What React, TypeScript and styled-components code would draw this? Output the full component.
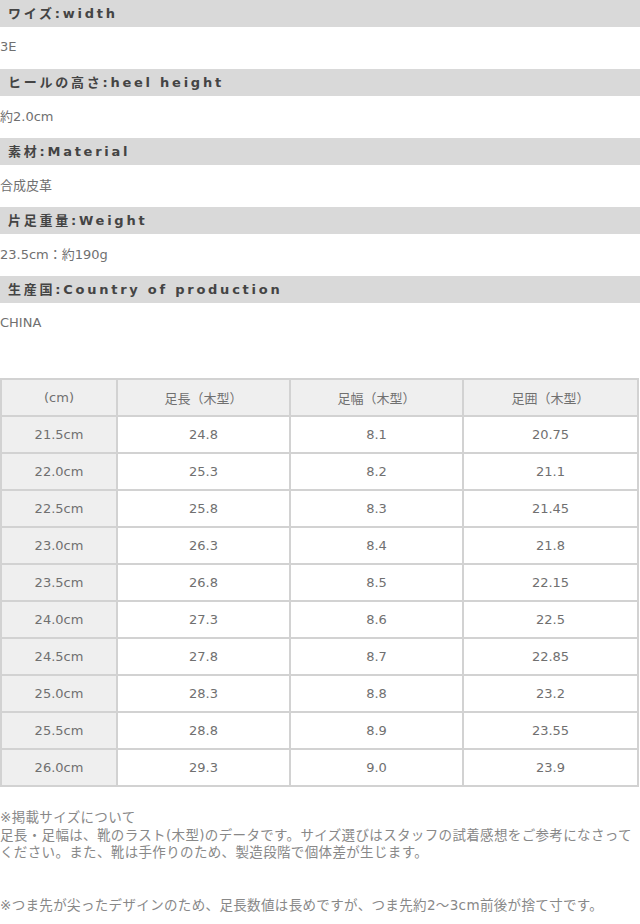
import React from "react";
import styled, { createGlobalStyle } from "styled-components";

const Global = createGlobalStyle`
  html, body { margin: 0; padding: 0; background: #fff; }
  body { font-family: "DejaVu Sans", "Noto Sans CJK JP", sans-serif; color: #777; }
`;

const Page = styled.div`
  width: 640px;
  display: flex;
  flex-direction: column;
`;

const Section = styled.section`
  display: flex;
  flex-direction: column;
`;

const SectionTitle = styled.div`
  height: 27px;
  box-sizing: border-box;
  padding: 0 0 3px 8px;
  background: #d9d9d9;
  display: flex;
  align-items: center;
  font-family: "DejaVu Sans", "Noto Sans CJK JP", sans-serif;
  font-weight: bold;
  font-size: 13px;
  letter-spacing: 2.75px;
  color: #444;
`;

const SectionValue = styled.div`
  height: 42px;
  display: flex;
  align-items: center;
  padding-bottom: 3px;
  box-sizing: border-box;
  font-size: 13px;
  color: #707070;
`;

const Table = styled.table`
  margin-top: 33px;
  width: 639px;
  border-collapse: collapse;
  table-layout: fixed;
  font-size: 13px;
  color: #707070;
`;

const Cell = styled.td<{ $shade?: boolean }>`
  border: 2px solid #d2d2d2;
  height: 35px;
  padding: 0;
  text-align: center;
  background: ${(p) => (p.$shade ? "#efefef" : "#fff")};
`;

const Notes = styled.div`
  margin-top: 22px;
  font-size: 13.5px;
  line-height: 17.5px;
  letter-spacing: 0.35px;
  color: #888;
  font-family: "DejaVu Sans", "Noto Sans CJK JP", sans-serif;
`;

const Gap = styled.div`
  height: 35px;
`;

const sections: [string, string][] = [
  ["ワイズ:width", "3E"],
  ["ヒールの高さ:heel height", "約2.0cm"],
  ["素材:Material", "合成皮革"],
  ["片足重量:Weight", "23.5cm：約190g"],
  ["生産国:Country of production", "CHINA"],
];

const rows: string[][] = [
  ["21.5cm", "24.8", "8.1", "20.75"],
  ["22.0cm", "25.3", "8.2", "21.1"],
  ["22.5cm", "25.8", "8.3", "21.45"],
  ["23.0cm", "26.3", "8.4", "21.8"],
  ["23.5cm", "26.8", "8.5", "22.15"],
  ["24.0cm", "27.3", "8.6", "22.5"],
  ["24.5cm", "27.8", "8.7", "22.85"],
  ["25.0cm", "28.3", "8.8", "23.2"],
  ["25.5cm", "28.8", "8.9", "23.55"],
  ["26.0cm", "29.3", "9.0", "23.9"],
];

const heads = ["(cm)", "足長（木型）", "足幅（木型）", "足囲（木型）"];

export default function App() {
  return (
    <Page>
      <Global />
      {sections.map(([t, v]) => (
        <Section key={t}>
          <SectionTitle>{t}</SectionTitle>
          <SectionValue>{v}</SectionValue>
        </Section>
      ))}
      <Table>
        <colgroup>
          <col style={{ width: 116 }} />
          <col style={{ width: 173 }} />
          <col style={{ width: 173 }} />
          <col style={{ width: 175 }} />
        </colgroup>
        <tbody>
          <tr>
            {heads.map((h) => (
              <Cell key={h} $shade>
                {h}
              </Cell>
            ))}
          </tr>
          {rows.map((r) => (
            <tr key={r[0]}>
              {r.map((c, i) => (
                <Cell key={i} $shade={i === 0}>
                  {c}
                </Cell>
              ))}
            </tr>
          ))}
        </tbody>
      </Table>
      <Notes>
        ※掲載サイズについて
        <br />
        足長・足幅は、靴のラスト(木型)のデータです。サイズ選びはスタッフの試着感想をご参考になさって
        <br />
        ください。また、靴は手作りのため、製造段階で個体差が生じます。
        <Gap />
        ※つま先が尖ったデザインのため、足長数値は長めですが、つま先約2～3cm前後が捨て寸です。
      </Notes>
    </Page>
  );
}
